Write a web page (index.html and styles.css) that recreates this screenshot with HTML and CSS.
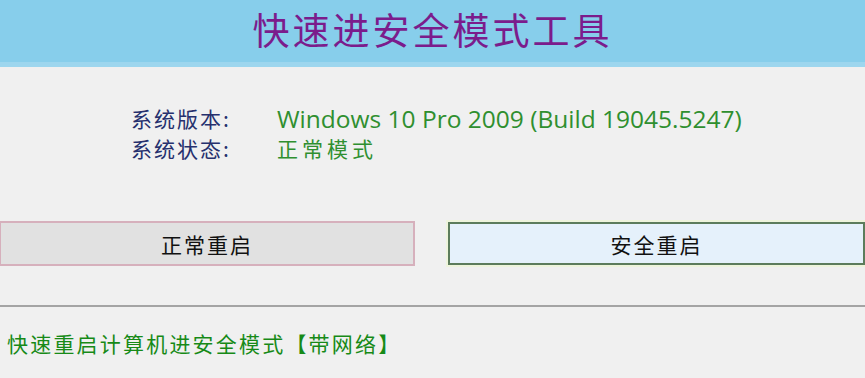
FILE: index.html
```html
<!DOCTYPE html>
<html lang="zh-CN">
<head>
<meta charset="utf-8">
<title>快速进安全模式工具</title>
<link rel="stylesheet" href="styles.css">
</head>
<body>
<header class="header">
  <h1 class="title">快速进安全模式工具</h1>
</header>
<main class="main">
  <section class="info">
    <div class="label">系统版本:</div>
    <div class="value value-latin">Windows 10 Pro 2009 (Build 19045.5247)</div>
    <div class="label">系统状态:</div>
    <div class="value">正常模式</div>
  </section>
  <section class="actions">
    <button class="btn btn-normal" type="button">正常重启</button>
    <button class="btn btn-safe" type="button">安全重启</button>
  </section>
  <hr class="sep">
  <p class="footer-text">快速重启计算机进安全模式【带网络】</p>
</main>
</body>
</html>
```
FILE: styles.css
```css
html, body {
  margin: 0;
  padding: 0;
}
body {
  width: 865px;
  height: 378px;
  overflow: hidden;
  background: #f0f0f0;
  font-family: "Noto Sans CJK SC", "Noto Sans", sans-serif;
}
.header {
  height: 62px;
  background: #87ceeb;
  border-bottom: 5px solid #9dd6ee;
  display: flex;
  justify-content: center;
  align-items: center;
}
.title {
  margin: 0;
  font-size: 37px;
  font-weight: 400;
  letter-spacing: 3px;
  color: #7b1c8c;
  line-height: 1;
  padding-left: 0;
  transform: translateY(-2px);
}
.main {
  display: flex;
  flex-direction: column;
}
.info {
  margin-top: 36px;
  padding-left: 131px;
  display: grid;
  grid-template-columns: 146px auto;
  grid-auto-rows: 30px;
  align-items: center;
}
.label {
  font-size: 21px;
  letter-spacing: 2px;
  color: #26306e;
}
.value {
  font-size: 21px;
  letter-spacing: 4px;
  color: #2f8f2f;
}
.value-latin {
  font-family: "Open Sans", "Noto Sans", sans-serif;
  font-size: 24.5px;
  letter-spacing: 0;
}
.actions {
  margin-top: 58px;
  display: flex;
  align-items: center;
  gap: 33px;
}
.btn {
  font-family: "Noto Sans CJK SC", sans-serif;
  font-size: 21px;
  letter-spacing: 2px;
  color: #111;
  padding: 0;
  cursor: pointer;
}
.btn-normal {
  width: 416px;
  height: 45px;
  margin-left: -1px;
  background: #e1e1e1;
  border: 2px solid #d6b0bc;
}
.btn-safe {
  width: 417px;
  height: 43px;
  background: #e5f1fb;
  border: 2px solid #5c7c5c;
  box-shadow: 0 0 0 2px #eef4dc;
}
.sep {
  margin: 39px 0 0 0;
  border: 0;
  border-top: 2px solid #a4a4a4;
  height: 0;
}
.footer-text {
  margin: 24px 0 0 7px;
  font-size: 21px;
  line-height: 24px;
  letter-spacing: 2.2px;
  color: #178a17;
}
```
